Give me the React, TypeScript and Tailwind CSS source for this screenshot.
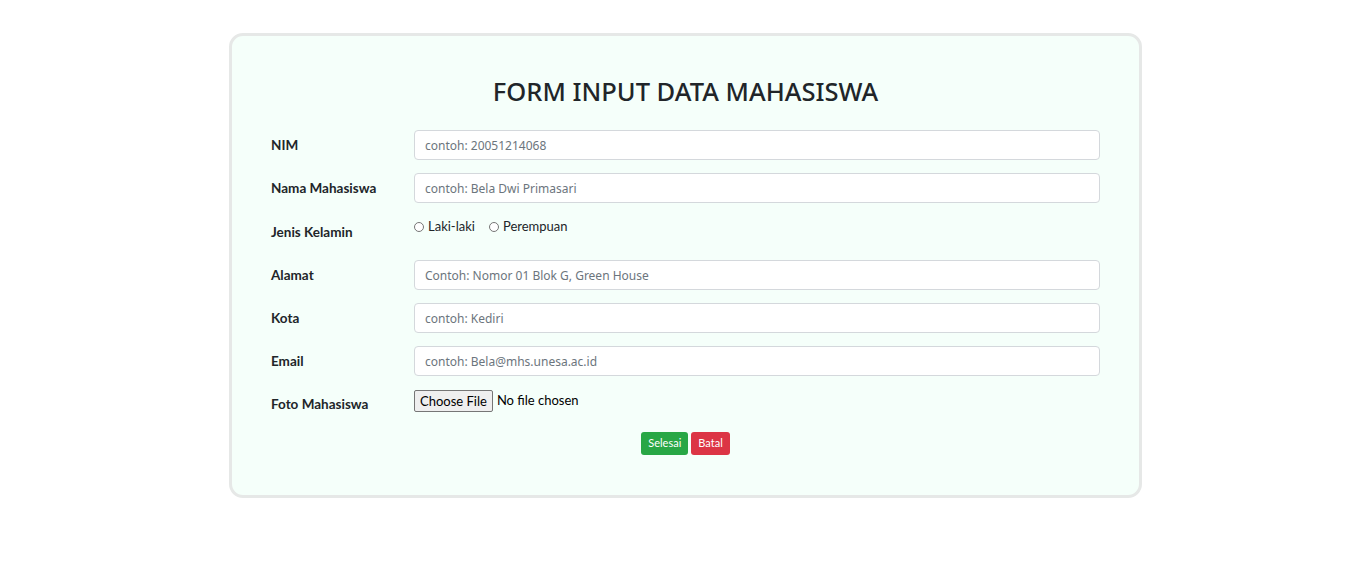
const fields = [
  { label: "NIM", placeholder: "contoh: 20051214068" },
  { label: "Nama Mahasiswa", placeholder: "contoh: Bela Dwi Primasari" },
];

const fields2 = [
  { label: "Alamat", placeholder: "Contoh: Nomor 01 Blok G, Green House" },
  { label: "Kota", placeholder: "contoh: Kediri" },
  { label: "Email", placeholder: "contoh: Bela@mhs.unesa.ac.id" },
];

function TextRow({ label, placeholder }: { label: string; placeholder: string }) {
  return (
    <div className="flex items-center">
      <label className="w-[143px] shrink-0 text-[13.5px] font-bold text-[#212529]">{label}</label>
      <input
        type="text"
        placeholder={placeholder}
        className="h-[30px] flex-1 rounded-[4px] border border-[#d4d8dc] bg-white px-[10px] font-['Noto_Sans',sans-serif] text-[12px] text-[#212529] placeholder:text-[#6c757d] outline-none"
      />
    </div>
  );
}

function Radio({ label }: { label: string }) {
  return (
    <label className="flex items-center gap-[4px] text-[13px] text-[#212529]">
      <span className="h-[10px] w-[10px] rounded-full border border-[#767676] bg-white" />
      {label}
    </label>
  );
}

export default function App() {
  return (
    <div className="min-h-[566px] bg-white pt-[33px] font-['Lato',sans-serif]">
      <div className="ml-[229px] w-[913px] rounded-[14px] border-[3px] border-[#e6e8e7] bg-[#f5fffa] px-[39px] pb-[40px] pt-[38px]">
        <h3 className="mb-[22px] text-center font-['Noto_Sans',sans-serif] text-[25.5px] font-medium leading-[34px] text-[#212529]">
          FORM INPUT DATA MAHASISWA
        </h3>
        <div className="flex flex-col gap-[13px]">
          {fields.map((f) => (
            <TextRow key={f.label} {...f} />
          ))}
          <div className="flex h-[31px]">
            <label className="w-[143px] shrink-0 pt-[6px] text-[13.5px] font-bold text-[#212529]">Jenis Kelamin</label>
            <div className="flex h-[22px] items-center gap-[14px]">
              <Radio label="Laki-laki" />
              <Radio label="Perempuan" />
            </div>
          </div>
          {fields2.map((f) => (
            <TextRow key={f.label} {...f} />
          ))}
          <div className="flex h-[31px] items-start">
            <label className="w-[143px] shrink-0 pt-[5px] text-[13.5px] font-bold text-[#212529]">Foto Mahasiswa</label>
            <div className="flex items-center gap-[4px] pt-[1px]">
              <button className="h-[22px] rounded-[2px] border border-[#767676] bg-[#efefef] px-[5px] text-[13px] leading-none text-black">
                Choose File
              </button>
              <span className="text-[13px] text-black">No file chosen</span>
            </div>
          </div>
        </div>
        <div className="mt-[12px] flex justify-center gap-[3px]">
          <button className="h-[23px] rounded-[3px] bg-[#28a745] px-[7px] text-[11px] text-white">Selesai</button>
          <button className="h-[23px] rounded-[3px] bg-[#dc3545] px-[7px] text-[11px] text-white">Batal</button>
        </div>
      </div>
    </div>
  );
}
